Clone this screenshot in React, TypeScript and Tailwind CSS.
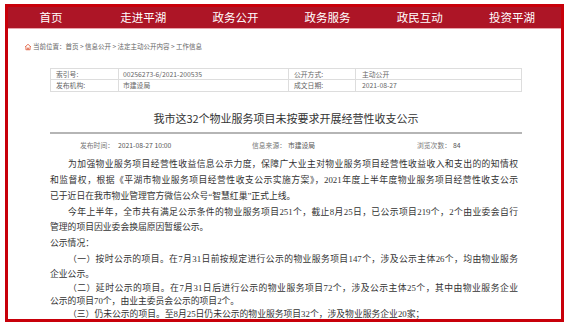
const navItems = ['首页', '走进平湖', '政务公开', '政务服务', '政民互动', '投资平湖'];

const sans = { fontFamily: '"Noto Sans CJK SC", "Noto Sans", sans-serif' };
const serif = { fontFamily: '"Liberation Serif", "Noto Sans CJK SC", serif' };

type LineProps = {
  text: string;
  lh: string;
  indent?: boolean;
  full?: boolean;
};

function Line({ text, lh, indent, full }: LineProps) {
  return (
    <div
      className={`whitespace-nowrap ${lh} ${indent ? 'pl-[18px]' : ''} ${
        full ? 'text-justify [text-align-last:justify]' : ''
      }`}
    >
      {text}
    </div>
  );
}

export default function App() {
  return (
    <div className="w-[571px] h-[326px] bg-white pl-[5px] pt-[4px]" style={sans}>
      <div className="w-[559px] h-[318px] border-[3px] border-[#c8000a] overflow-hidden flex flex-col bg-white">
        {/* nav */}
        <div className="h-[22px] bg-[#ad1526] border-b border-[#e9a3ab] shrink-0">
          <div className="grid grid-cols-6 -ml-[3px] mr-[3px] h-[21px] items-center">
            {navItems.map((item) => (
              <div key={item} className="text-center text-white text-[11.5px] leading-[21px]">
                {item}
              </div>
            ))}
          </div>
        </div>

        {/* breadcrumb */}
        <div className="flex items-center gap-[1px] pl-[16px] mt-[13px] h-[10px] text-[6.5px] text-[#666]">
          <svg width="8" height="8" viewBox="0 0 16 16" fill="none" stroke="#e05a3a" strokeWidth="1.6">
            <path d="M2 8 L8 2.5 L14 8" />
            <path d="M3.8 6.8 V13.5 H12.2 V6.8" />
            <path d="M6.6 13.5 V10 H9.4 V13.5" />
          </svg>
          <span>当前位置：首页 &gt; 信息公开 &gt; 法定主动公开内容 &gt; 工作信息</span>
        </div>

        <div className="pl-[42px] pr-[39px]">
          {/* info table */}
          <div className="mt-[16px] border border-[#dddddd] text-[6.8px] text-[#666]">
            <div className="flex h-[11px] border-b border-[#dddddd]">
              <div className="w-[68px] pl-[5px] border-r border-[#dddddd] leading-[10px]">索引号:</div>
              <div className="w-[170px] pl-[4px] border-r border-[#dddddd] leading-[10px]">00256273-6/2021-200535</div>
              <div className="w-[67px] pl-[5px] border-r border-[#dddddd] leading-[10px]">公开方式:</div>
              <div className="flex-1 pl-[6px] leading-[10px]">主动公开</div>
            </div>
            <div className="flex h-[11px]">
              <div className="w-[68px] pl-[5px] border-r border-[#dddddd] leading-[10px]">发布机构:</div>
              <div className="w-[170px] pl-[4px] border-r border-[#dddddd] leading-[10px]">市建设局</div>
              <div className="w-[67px] pl-[5px] border-r border-[#dddddd] leading-[10px]">成文日期:</div>
              <div className="flex-1 pl-[6px] leading-[10px]">2021-08-27</div>
            </div>
          </div>

          {/* title */}
          <div className="mt-[18px] pb-[6px] border-b-2 border-[#b5b5b5] text-center text-[11px] leading-[16px] text-[#333]">
            我市这32个物业服务项目未按要求开展经营性收支公示
          </div>

          {/* meta */}
          <div className="flex mt-[6px] h-[10px] leading-[10px] text-[6.8px] text-[#777] pl-[30px]">
            <div className="w-[172px]">
              发布时间：<span className="ml-[4px] text-[#555]">2021-08-27 10:00</span>
            </div>
            <div className="w-[165px]">
              信息来源：<span className="ml-[2px] text-[#555]">市建设局</span>
            </div>
            <div>
              浏览次数：<span className="ml-[2px] text-[#555]">84</span>
            </div>
          </div>

          {/* body */}
          <div className="mt-[6px] w-[468px] text-[8.8px] text-[#333]" style={serif}>
            <Line
              full
              indent
              lh="leading-[16px]"
              text="为加强物业服务项目经营性收益信息公示力度，保障广大业主对物业服务项目经营性收益收入和支出的的知情权"
            />
            <Line
              full
              lh="leading-[16px]"
              text="和监督权，根据《平湖市物业服务项目经营性收支公示实施方案》，2021年度上半年度物业服务项目经营性收支公示"
            />
            <Line lh="leading-[17px]" text="已于近日在我市物业管理官方微信公众号“智慧红巢”正式上线。" />
            <Line
              full
              indent
              lh="leading-[15px]"
              text="今年上半年，全市共有满足公示条件的物业服务项目251个，截止8月25日，已公示项目219个，2个由业委会自行"
            />
            <Line lh="leading-[15px]" text="管理的项目因业委会换届原因暂缓公示。" />
            <Line lh="leading-[17px]" text="公示情况：" />
            <Line
              full
              indent
              lh="leading-[14px]"
              text="（一）按时公示的项目。在7月31日前按规定进行公示的物业服务项目147个，涉及公示主体26个，均由物业服务"
            />
            <Line lh="leading-[16px]" text="企业公示。" />
            <Line
              full
              indent
              lh="leading-[12px]"
              text="（二）延时公示的项目。在7月31日后进行公示的物业服务项目72个，涉及公示主体25个，其中由物业服务企业"
            />
            <Line lh="leading-[14px]" text="公示的项目70个，由业主委员会公示的项目2个。" />
            <Line indent lh="leading-[12px]" text="（三）仍未公示的项目。至8月25日仍未公示的物业服务项目32个，涉及物业服务企业20家；" />
            <div className="ml-[120px] w-[235px] h-[10px] border border-[#999]" />
          </div>
        </div>
      </div>
    </div>
  );
}
